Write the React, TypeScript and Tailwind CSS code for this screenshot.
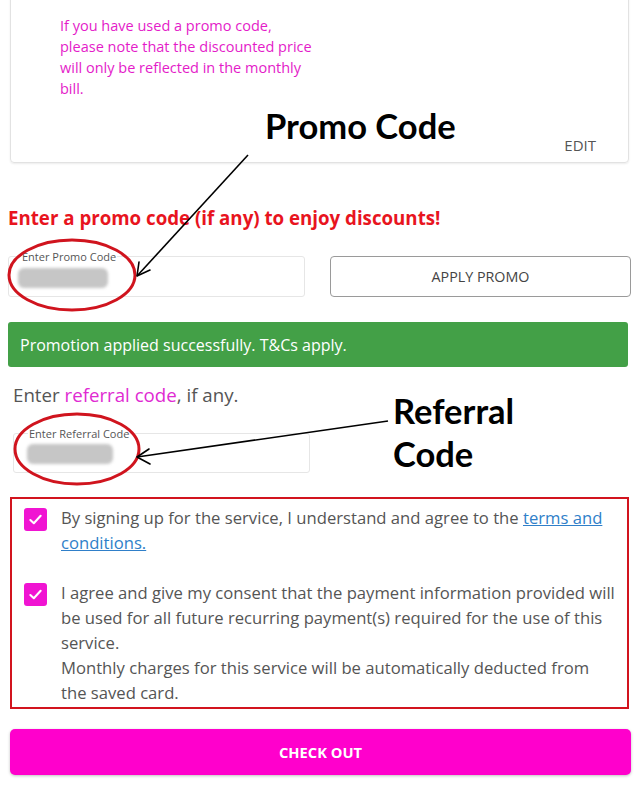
import React from "react";

function Check() {
  return (
    <div className="flex h-[23px] w-[23px] shrink-0 items-center justify-center rounded-[3px] bg-[#f014d2]">
      <svg width="15" height="15" viewBox="0 0 16 16" fill="none">
        <path d="M2.5 8.5 L6.2 12 L13.5 4" stroke="white" strokeWidth="2.2" strokeLinecap="round" strokeLinejoin="round" />
      </svg>
    </div>
  );
}

function Blur({ w }: { w: number }) {
  return <div className="h-[20px] rounded-[6px] bg-[#c6c6c6] blur-[1.5px]" style={{ width: w }} />;
}

export default function App() {
  return (
    <div className="relative h-[786px] w-[639px] overflow-hidden bg-white font-['Open_Sans',sans-serif] text-[#444]">
      {/* card */}
      <div className="mx-[10px] -mt-[10px] h-[173px] rounded-[4px] border border-[#e2e2e2] shadow-[0_1px_2px_rgba(0,0,0,0.08)] pl-[49px] pr-[32px] pt-[24px]">
        <p className="whitespace-nowrap text-[14.5px] leading-[21px] text-[#e41bc9]">
          If you have used a promo code,
          <br />
          please note that the discounted price
          <br />
          will only be reflected in the monthly
          <br />
          bill.
        </p>
        <div className="mt-[36px] text-right text-[15px] leading-[20px] text-[#555]">EDIT</div>
      </div>

      {/* heading */}
      <h2 className="mt-[43px] ml-[8px] text-[18.7px] font-bold leading-[24px] text-[#e8141e]">
        Enter a promo code (if any) to enjoy discounts!
      </h2>

      {/* promo row */}
      <div className="mt-[26px] ml-[8px] mr-[8px] flex gap-[25px]">
        <div className="relative h-[41px] w-[297px] rounded-[3px] border border-[#e6e6e6]">
          <span className="absolute -top-[7px] left-[12px] bg-white px-[1px] text-[11px] leading-[13px] text-[#555]">Enter Promo Code</span>
          <div className="absolute left-[9px] top-[11px]"><Blur w={90} /></div>
        </div>
        <div className="flex h-[41px] w-[301px] items-center justify-center rounded-[4px] border border-[#9a9a9a] text-[14.3px] text-[#444]">
          APPLY PROMO
        </div>
      </div>

      {/* success */}
      <div className="mt-[25px] ml-[8px] mr-[11px] flex h-[45px] items-center rounded-[3px] bg-[#43a047] pl-[12px] text-[16px] text-white">
        Promotion applied successfully. T&amp;Cs apply.
      </div>

      {/* referral */}
      <p className="mt-[15px] ml-[13px] text-[18.7px] leading-[26px] text-[#555]">
        Enter <span className="text-[#e02ad2]">referral code</span>, if any.
      </p>
      <div className="relative mt-[25px] ml-[13px] h-[40px] w-[297px] rounded-[3px] border border-[#e6e6e6]">
        <span className="absolute -top-[7px] left-[14px] bg-white px-[1px] text-[11px] leading-[13px] text-[#555]">Enter Referral Code</span>
        <div className="absolute left-[13px] top-[10px]"><Blur w={86} /></div>
      </div>

      {/* consent box */}
      <div className="mt-[24px] ml-[10px] mr-[10px] border-[2.5px] border-[#d2141e] pl-[12px] pr-[4px] pt-[9px] pb-[2px] text-[16.65px] leading-[25px] text-[#555]">
        <div className="flex gap-[14px]">
          <Check />
          <p className="-mt-[3px] whitespace-nowrap">
            By signing up for the service, I understand and agree to the{" "}
            <span className="text-[#2f7fc9] underline">
              terms and
              <br />
              conditions.
            </span>
          </p>
        </div>
        <div className="mt-[28px] flex gap-[14px]">
          <Check />
          <p className="-mt-[3px] whitespace-nowrap">
            I agree and give my consent that the payment information provided will
            <br />
            be used for all future recurring payment(s) required for the use of this
            <br />
            service.
            <br />
            Monthly charges for this service will be automatically deducted from
            <br />
            the saved card.
          </p>
        </div>
      </div>

      {/* checkout */}
      <div className="mt-[20px] ml-[10px] mr-[8px] flex h-[46px] items-center justify-center rounded-[5px] bg-[#ff00cc] text-[14.7px] font-bold text-white shadow-[0_1px_3px_rgba(0,0,0,0.25)]">
        CHECK OUT
      </div>

      {/* annotations */}
      <div className="absolute left-[265px] top-[104px] font-['Lato',sans-serif] text-[34.5px] font-bold leading-[44px] text-black">Promo Code</div>
      <div className="absolute left-[393px] top-[389px] font-['Lato',sans-serif] text-[34.5px] font-bold leading-[43px] text-black">
        Referral
        <br />
        Code
      </div>
      <svg className="pointer-events-none absolute left-0 top-0" width="639" height="786" viewBox="0 0 639 786" fill="none">
        <ellipse cx="72" cy="275" rx="63" ry="35" stroke="#d0141e" strokeWidth="3" />
        <ellipse cx="77" cy="449" rx="62" ry="35" stroke="#d0141e" strokeWidth="3" />
        <path d="M248 155 L137 276" stroke="black" strokeWidth="1.6" />
        <path d="M137 276 L139 262 M137 276 L150 270" stroke="black" strokeWidth="1.6" strokeLinecap="round" />
        <path d="M388 421 L137 457" stroke="black" strokeWidth="1.6" />
        <path d="M137 457 L149 449 M137 457 L150 464" stroke="black" strokeWidth="1.6" strokeLinecap="round" />
      </svg>
    </div>
  );
}
